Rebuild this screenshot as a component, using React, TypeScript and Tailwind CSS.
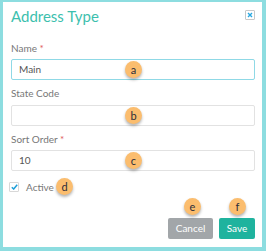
import React from "react";

function Badge({ ch, className }: { ch: string; className: string }) {
  return (
    <div
      className={`absolute w-[17px] h-[17px] rounded-full bg-[#fbbd6e] shadow-[0_2px_3px_rgba(0,0,0,0.3)] flex items-center justify-center text-[11px] leading-none text-[#2d2d3a] ${className}`}
    >
      <span className="-mt-[1px]">{ch}</span>
    </div>
  );
}

export default function App() {
  return (
    <div className="w-[266px] h-[251px] bg-white border-[#8ddde0] border-t-2 border-l-[3px] border-r-4 border-b-4 font-['Lato',sans-serif] box-border">
      <div className="relative pl-[8px] pr-[7px] pt-[5px]">
        <div className="flex items-start justify-between">
          <div className="text-[15px] leading-[18px] text-[#3dbfae]">Address Type</div>
          <div className="mt-[3px] w-[10px] h-[10px] border border-[#c8c8c8] rounded-[1px] flex items-center justify-center">
            <svg width="6" height="6" viewBox="0 0 6 6">
              <path d="M1 1 L5 5 M5 1 L1 5" stroke="#29a8e0" strokeWidth="1.4" />
            </svg>
          </div>
        </div>

        <div className="mt-[17px] text-[10px] leading-[12px] text-[#777]">
          Name <span className="text-[#e05a5a]">*</span>
        </div>
        <div className="relative mt-[5px] h-[21px] border border-[#8fd9e6] rounded-[2px] flex items-center pl-[7px] text-[10px] text-[#555]">
          Main
          <Badge ch="a" className="left-[113px] top-[1px]" />
        </div>

        <div className="mt-[7px] text-[10px] leading-[12px] text-[#777]">State Code</div>
        <div className="relative mt-[6px] h-[21px] border border-[#e2e2e2] rounded-[2px]">
          <Badge ch="b" className="left-[113px] top-[1px]" />
        </div>

        <div className="mt-[7px] text-[10px] leading-[12px] text-[#777]">
          Sort Order <span className="text-[#e05a5a]">*</span>
        </div>
        <div className="relative mt-[5px] h-[21px] border border-[#e2e2e2] rounded-[2px] flex items-center pl-[7px] text-[10px] text-[#555]">
          10
          <Badge ch="c" className="left-[113px] top-[1px]" />
        </div>

        <div className="relative mt-[10px] flex items-center">
          <div className="ml-[-2px] w-[10px] h-[10px] border border-[#d8d8d8] rounded-[1px] flex items-center justify-center">
            <svg width="7" height="6" viewBox="0 0 7 6">
              <path d="M0.8 3.2 L2.7 5 L6.2 0.8" stroke="#1d9fd9" strokeWidth="1.5" fill="none" />
            </svg>
          </div>
          <span className="ml-[7px] text-[10px] leading-[12px] text-[#777]">Active</span>
          <Badge ch="d" className="left-[45px] top-[-3px]" />
        </div>

        <div className="relative mt-[25px] flex justify-end gap-[6px]">
          <div className="relative w-[45px] h-[21px] rounded-[2px] bg-[#a2a6a9] text-white text-[10px] flex items-center justify-center">
            Cancel
            <Badge ch="e" className="left-[16px] top-[-20px]" />
          </div>
          <div className="relative w-[36px] h-[21px] rounded-[2px] bg-[#1fb39e] text-white text-[10px] flex items-center justify-center">
            Save
            <Badge ch="f" className="left-[10px] top-[-20px]" />
          </div>
        </div>
      </div>
    </div>
  );
}
